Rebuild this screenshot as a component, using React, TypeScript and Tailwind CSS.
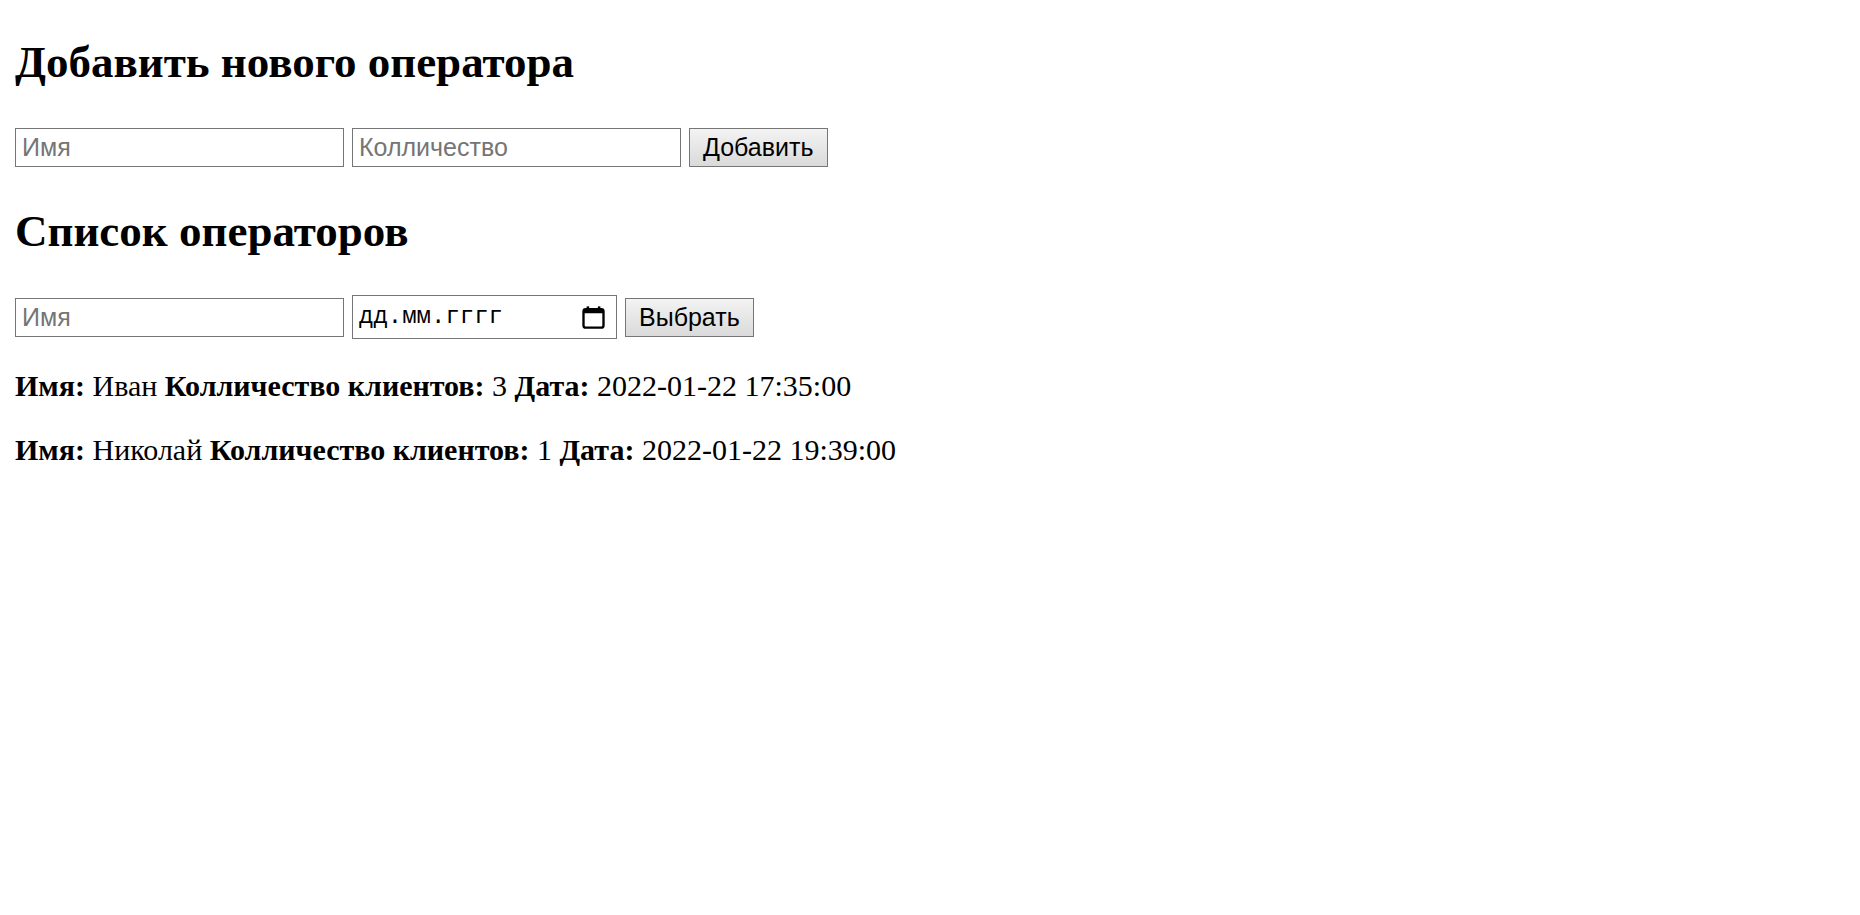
const rows = [
  { name: "Иван", count: 3, date: "2022-01-22 17:35:00" },
  { name: "Николай", count: 1, date: "2022-01-22 19:39:00" },
];

function CalendarIcon() {
  return (
    <svg width="25" height="26" viewBox="0 0 16 16" className="shrink-0">
      <rect x="1.6" y="3" width="12.8" height="11.8" rx="1.4" fill="none" stroke="black" strokeWidth="1.5" />
      <rect x="1.6" y="3" width="12.8" height="2.6" fill="black" />
      <rect x="3.6" y="1.2" width="1.6" height="2.6" fill="black" />
      <rect x="10.8" y="1.2" width="1.6" height="2.6" fill="black" />
    </svg>
  );
}

const inputCls =
  "w-[329px] h-[39px] border border-[#767676] bg-white pl-[6px] text-[25px] text-black placeholder:text-[#757575] outline-none font-['Liberation_Sans',Arial,sans-serif]";
const buttonCls =
  "h-[39px] px-[13px] border border-[#767676] bg-gradient-to-b from-[#f3f3f3] to-[#dadada] text-[25px] text-black font-['Liberation_Sans',Arial,sans-serif]";

export default function App() {
  return (
    <div className="min-h-[915px] bg-white px-[15px] text-black font-['Liberation_Serif','Times_New_Roman',serif]">
      {/* Add operator */}
      <h2 className="pt-[37px] text-[45px] leading-[50px] font-bold">Добавить нового оператора</h2>
      <form className="mt-[41px] flex items-center gap-[8px]">
        <input type="text" placeholder="Имя" className={inputCls} />
        <input type="text" placeholder="Колличество" className={inputCls} />
        <button type="button" className={buttonCls}>
          Добавить
        </button>
      </form>

      {/* List */}
      <h2 className="mt-[39px] text-[45px] leading-[50px] font-bold">Список операторов</h2>
      <form className="mt-[39px] h-[44px] flex items-center gap-[8px]">
        <input type="text" placeholder="Имя" className={inputCls} />
        <div className="w-[265px] h-[44px] border border-[#767676] bg-white flex items-center justify-between pl-[6px] pr-[10px]">
          <span className="text-[24px] font-['Liberation_Mono','Courier_New',monospace]">дд.мм.гггг</span>
          <CalendarIcon />
        </div>
        <button type="button" className={`${buttonCls} h-[38px]`}>
          Выбрать
        </button>
      </form>

      <div className="mt-[30px] flex flex-col gap-[31px]">
        {rows.map((r) => (
          <p key={r.name} className="text-[30px] leading-[33px]">
            <b>Имя:</b> {r.name} <b>Колличество клиентов:</b> {r.count} <b>Дата:</b> {r.date}
          </p>
        ))}
      </div>
    </div>
  );
}
